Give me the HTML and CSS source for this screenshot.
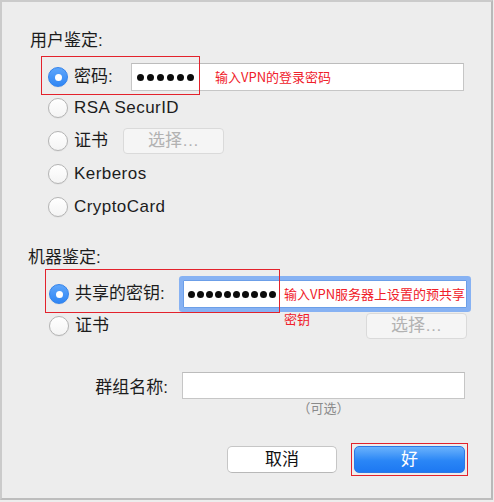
FILE: index.html
```html
<!DOCTYPE html>
<html lang="zh-CN">
<head>
<meta charset="utf-8">
<title>VPN 鉴定</title>
<link rel="stylesheet" href="styles.css">
</head>
<body>
<div class="dialog">
  <div class="heading heading-user">用户鉴定:</div>
  <div class="group group-user">
    <div class="row row-first">
      <div class="choice choice-pwd"><span class="radio on"></span><span class="label">密码:</span></div>
      <div class="field field-pwd">
        <span class="dots dots-pwd"><i></i><i></i><i></i><i></i><i></i><i></i></span>
        <span class="note">输入VPN的登录密码</span>
      </div>
      <div class="mark mark-pwd"></div>
    </div>
    <div class="row"><span class="radio"></span><span class="label latin">RSA SecurID</span></div>
    <div class="row">
      <div class="choice choice-cert"><span class="radio"></span><span class="label">证书</span></div>
      <button class="btn btn-choose" disabled>选择…</button>
    </div>
    <div class="row"><span class="radio"></span><span class="label latin">Kerberos</span></div>
    <div class="row"><span class="radio"></span><span class="label latin">CryptoCard</span></div>
  </div>

  <div class="heading heading-machine">机器鉴定:</div>
  <div class="group group-machine">
    <div class="row row-psk">
      <div class="choice choice-psk"><span class="radio on"></span><span class="label">共享的密钥:</span></div>
      <div class="field field-psk">
        <span class="dots dots-psk"><i></i><i></i><i></i><i></i><i></i><i></i><i></i><i></i><i></i><i></i></span>
      </div>
      <div class="note-psk">
        <span class="note-line">输入VPN服务器上设置的预共享</span>
        <span class="note-line">密钥</span>
      </div>
      <div class="mark mark-psk"></div>
    </div>
    <div class="row row-cert2">
      <span class="radio"></span><span class="label">证书</span>
      <button class="btn btn-choose btn-right" disabled>选择…</button>
    </div>
  </div>

  <div class="row row-name">
    <span class="name-label">群组名称:</span>
    <div class="field field-name"></div>
  </div>
  <div class="optional">（可选）</div>

  <div class="actions">
    <button class="btn btn-cancel">取消</button>
    <button class="btn btn-ok">好</button>
  </div>
</div>
</body>
</html>
```

FILE: styles.css
```css
html, body {
  margin: 0;
  padding: 0;
  background: #ededed;
}

body {
  font-family: "Liberation Sans", "Noto Sans CJK SC", sans-serif;
  font-size: 17px;
  color: #1c1c1c;
}

.dialog {
  box-sizing: border-box;
  width: 493px;
  height: 500px;
  border: 2px solid #cbcbcb;
  border-right-color: #b9b9b9;
  border-bottom-color: #bdbdbd;
  background: #ededed;
  padding: 29px 24px 0 26px;
}

.heading {
  line-height: 20px;
  height: 20px;
}

.heading-user {
  margin-left: 2px;
}

.heading-machine {
  margin-top: 25px;
}

.group-user {
  margin-top: 12px;
  padding-left: 20px;
}

.group-machine {
  margin-top: 12px;
  padding-left: 21px;
}

.row {
  position: relative;
  display: flex;
  align-items: center;
  height: 33px;
}

.row-first {
  height: 28px;
}

.choice {
  display: flex;
  align-items: center;
  flex: none;
}

.choice-pwd { width: 83px; }
.choice-cert { width: 75px; }
.choice-psk { width: 134px; }

.radio {
  box-sizing: border-box;
  flex: none;
  width: 20px;
  height: 20px;
  border-radius: 50%;
  border: 1px solid #b4b4b4;
  background: linear-gradient(#ffffff, #f4f4f4);
  box-shadow: 0 0.5px 1px rgba(0, 0, 0, 0.08);
  display: flex;
  align-items: center;
  justify-content: center;
}

.radio.on {
  border-color: #3283ec;
  background: linear-gradient(#5ea6fb, #2f86f4);
}

.radio.on::after {
  content: "";
  width: 7px;
  height: 7px;
  border-radius: 50%;
  background: #ffffff;
}

.label {
  margin-left: 6px;
  line-height: 20px;
  white-space: nowrap;
}

.latin {
  letter-spacing: 0.45px;
}

.field {
  box-sizing: border-box;
  height: 28px;
  background: #ffffff;
  border: 1px solid #c6c6c6;
  border-top-color: #bcbcbc;
  display: flex;
  align-items: center;
}

.field-pwd {
  flex: 1;
  margin-right: 3px;
  padding-left: 5px;
}

.field-psk {
  flex: 1;
  padding-left: 4px;
  border-color: #6c9fe8;
  border-radius: 1px;
  box-shadow: 0 0 0 4px #87b2f3;
}

.dots {
  display: flex;
  gap: 3px;
}

.dots-psk {
  gap: 2px;
}

.dots i {
  width: 7px;
  height: 7px;
  border-radius: 50%;
  background: #0c0c0c;
}

.note,
.note-line {
  font-family: "Noto Sans CJK SC", sans-serif;
  font-size: 13px;
  color: #f0202a;
}

.note {
  margin-left: 21px;
  line-height: 16px;
}

.note-psk {
  position: absolute;
  left: 235px;
  top: 1px;
  display: flex;
  flex-direction: column;
  align-items: flex-start;
}

.note-line {
  line-height: 25px;
  white-space: nowrap;
}

.mark {
  position: absolute;
  box-sizing: border-box;
  border: 1.5px solid #e3222c;
  pointer-events: none;
}

.mark-pwd {
  left: -7px;
  top: -7px;
  width: 159px;
  height: 39px;
}

.row-psk {
  height: 28px;
}

.mark-psk {
  left: -4px;
  top: -11px;
  width: 235px;
  height: 44px;
}

.row-cert2 {
  margin-top: 4px;
  height: 27px;
}

.btn {
  box-sizing: border-box;
  font-family: "Liberation Sans", "Noto Sans CJK SC", sans-serif;
  font-size: 17px;
  padding: 0;
  margin: 0;
  border-radius: 4px;
  line-height: 1;
}

.btn-choose {
  width: 101px;
  height: 26px;
  background: #f5f5f5;
  border: 1px solid #dadada;
  color: #b2b2b2;
}

.btn-right {
  margin-left: auto;
}

.row-name {
  margin-top: 33px;
  height: 27px;
}

.name-label {
  width: 140px;
  margin-right: 14px;
  text-align: right;
  flex: none;
}

.field-name {
  flex: 1;
  height: 27px;
  margin-right: 2px;
}

.optional {
  margin: 2px 2px 0 154px;
  text-align: center;
  font-size: 13px;
  line-height: 16px;
  color: #8a8a8a;
}

.actions {
  margin-top: 29px;
  display: flex;
  justify-content: flex-end;
  gap: 17px;
  padding-right: 2px;
}

.btn-cancel {
  width: 110px;
  height: 27px;
  background: #ffffff;
  border: 1px solid #c6c6c6;
  border-bottom-color: #b8b8b8;
  border-radius: 5px;
  color: #111111;
}

.btn-ok {
  position: relative;
  width: 111px;
  height: 27px;
  border: 1px solid #2d78e4;
  border-radius: 5px;
  background: linear-gradient(#6ab2fc, #2a86f6 55%, #1d78f2);
  color: #ffffff;
}

.btn-ok::after {
  content: "";
  position: absolute;
  left: -4px;
  top: -4px;
  right: -4px;
  bottom: -4px;
  border: 1.5px solid #e3222c;
}
```
